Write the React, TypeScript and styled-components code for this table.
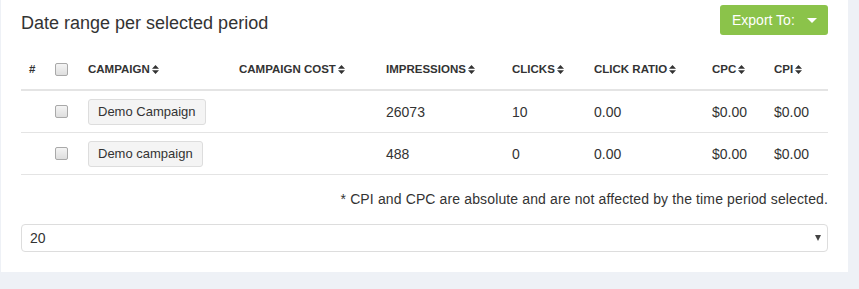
import React from 'react';
import styled, { createGlobalStyle } from 'styled-components';

const GlobalStyle = createGlobalStyle`
  html, body {
    margin: 0;
    padding: 0;
    background: #eef1f6;
  }
  body {
    font-family: 'Liberation Sans', Arial, sans-serif;
    color: #333;
  }
`;

type Row = {
  name: string;
  impressions: string;
  clicks: string;
  ratio: string;
  cpc: string;
  cpi: string;
};

const rows: Row[] = [
  { name: 'Demo Campaign', impressions: '26073', clicks: '10', ratio: '0.00', cpc: '$0.00', cpi: '$0.00' },
  { name: 'Demo campaign', impressions: '488', clicks: '0', ratio: '0.00', cpc: '$0.00', cpi: '$0.00' },
];

const columns: { label: string; width: number; sortable: boolean }[] = [
  { label: '#', width: 26, sortable: false },
  { label: '', width: 33, sortable: false },
  { label: 'Campaign', width: 151, sortable: true },
  { label: 'Campaign Cost', width: 147, sortable: true },
  { label: 'Impressions', width: 126, sortable: true },
  { label: 'Clicks', width: 82, sortable: true },
  { label: 'Click Ratio', width: 118, sortable: true },
  { label: 'CPC', width: 62, sortable: true },
  { label: 'CPI', width: 62, sortable: true },
];

const Page = styled.div`
  width: 859px;
  height: 289px;
  background: #eef1f6;
  box-sizing: border-box;
  padding-left: 1px;
`;

const Panel = styled.div`
  width: 847px;
  height: 272px;
  background: #fff;
  box-sizing: border-box;
  padding: 5px 20px 0 20px;
`;

const Header = styled.div`
  display: flex;
  align-items: center;
  justify-content: space-between;
  height: 30px;
`;

const Title = styled.h3`
  margin: 0;
  padding-top: 6px;
  font-size: 18px;
  font-weight: normal;
  color: #333;
`;

const ExportButton = styled.button`
  display: flex;
  align-items: center;
  gap: 12px;
  height: 30px;
  width: 108px;
  padding: 0 0 0 12px;
  border: none;
  border-radius: 3px;
  background: #8bc34a;
  color: #fff;
  font-family: inherit;
  font-size: 14px;
  cursor: pointer;
`;

const Caret = styled.span`
  width: 0;
  height: 0;
  border-left: 5px solid transparent;
  border-right: 5px solid transparent;
  border-top: 5px solid #fff;
`;

const Table = styled.table`
  width: 807px;
  margin-top: 14px;
  border-collapse: collapse;
  table-layout: fixed;
`;

const Th = styled.th`
  text-align: left;
  padding: 0 8px;
  height: 40px;
  font-size: 11.5px;
  font-weight: bold;
  text-transform: uppercase;
  color: #333;
  border-bottom: 2px solid #e4e4e4;
  white-space: nowrap;
  vertical-align: middle;
`;

const Td = styled.td`
  padding: 0 8px;
  height: 41px;
  font-size: 14px;
  color: #333;
  border-bottom: 1px solid #e4e4e4;
  vertical-align: middle;
`;

const Check = styled.input.attrs({ type: 'checkbox' })`
  appearance: none;
  display: block;
  margin: 0;
  width: 13px;
  height: 13px;
  border: 1px solid #a9a9a9;
  border-radius: 2px;
  background: linear-gradient(#f4f4f4, #dedede);
  box-sizing: border-box;
`;

const NameButton = styled.span`
  display: inline-block;
  padding: 0 9px;
  height: 24px;
  line-height: 24px;
  border: 1px solid #ddd;
  border-radius: 3px;
  background: #f4f4f4;
  font-size: 13px;
  color: #333;
`;

const SortIcon = () => (
  <svg width="7" height="9" viewBox="0 0 7 9" style={{ marginLeft: 2, verticalAlign: '-1px' }}>
    <path d="M0 3.8 L3.5 0 L7 3.8 Z M0 5.2 L3.5 9 L7 5.2 Z" fill="#333" />
  </svg>
);

const Note = styled.p`
  margin: 16px 0 0;
  text-align: right;
  font-size: 14px;
  letter-spacing: 0.13px;
  color: #333;
`;

const SelectBox = styled.div`
  margin-top: 17px;
  height: 28px;
  border: 1px solid #ddd;
  border-radius: 4px;
  box-sizing: border-box;
  display: flex;
  align-items: center;
  justify-content: space-between;
  padding: 0 6px 0 8px;
  font-size: 14px;
  color: #333;
`;

const SelectArrow = styled.span`
  width: 0;
  height: 0;
  border-left: 3.5px solid transparent;
  border-right: 3.5px solid transparent;
  border-top: 6px solid #444;
`;

const App: React.FC = () => (
  <Page>
    <GlobalStyle />
    <Panel>
      <Header>
        <Title>Date range per selected period</Title>
        <ExportButton>
          Export To:
          <Caret />
        </ExportButton>
      </Header>
      <Table>
        <colgroup>
          {columns.map((c, i) => (
            <col key={i} style={{ width: c.width }} />
          ))}
        </colgroup>
        <thead>
          <tr>
            {columns.map((c, i) => (
              <Th key={i}>
                {i === 1 ? <Check /> : c.label}
                {c.sortable && <SortIcon />}
              </Th>
            ))}
          </tr>
        </thead>
        <tbody>
          {rows.map((r) => (
            <tr key={r.name}>
              <Td />
              <Td>
                <Check />
              </Td>
              <Td>
                <NameButton>{r.name}</NameButton>
              </Td>
              <Td />
              <Td>{r.impressions}</Td>
              <Td>{r.clicks}</Td>
              <Td>{r.ratio}</Td>
              <Td>{r.cpc}</Td>
              <Td>{r.cpi}</Td>
            </tr>
          ))}
        </tbody>
      </Table>
      <Note>* CPI and CPC are absolute and are not affected by the time period selected.</Note>
      <SelectBox>
        20
        <SelectArrow />
      </SelectBox>
    </Panel>
  </Page>
);

export default App;
